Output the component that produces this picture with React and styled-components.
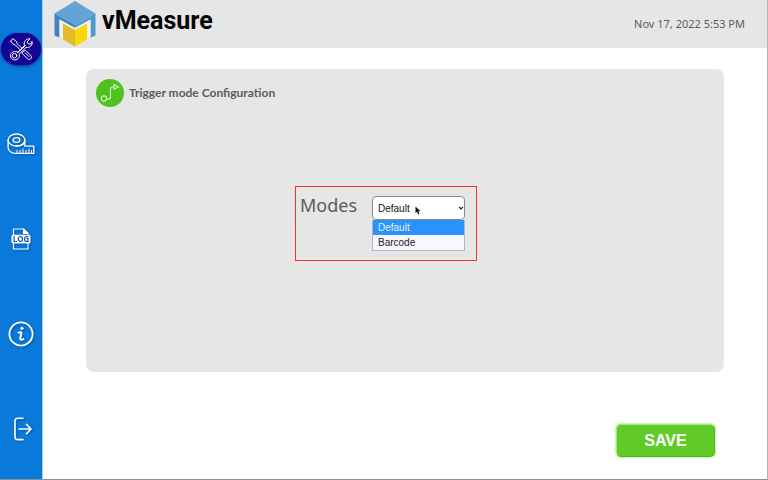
import React, { useState } from "react";
import styled, { createGlobalStyle } from "styled-components";

const MODES = ["Default", "Barcode"];

const ToolsIcon = () => (
  <Glyph width="24" height="24" viewBox="0 0 24 24" strokeWidth="1">
    <path d="M1.6 4 L4 1.6 L7.6 4.6 L7.8 6.2 L12.6 11 M1.6 4 L4.6 7.6 L6.2 7.8 L11 12.6" />
    <path d="M14 14.6 L16.4 13.2 L21.8 18.4 C23.6 21 20.8 23.8 18.4 21.8 L13.2 16.4 Z M16.2 15.8 L19.8 19.4" />
    <path d="M8.8 15.2 L15.4 8.6 C14.4 4.6 17.2 1.2 21 1.8 L18 5 L19.2 7 L21.4 7.2 L23 4.4 C24 8.2 20.8 11.2 17 10.4 L10.2 17.2 C11.2 21 8 23.6 4.6 22.8 C0.4 21.4 0.4 16.2 4.2 14.8 C6 14.2 7.6 14.4 8.8 15.2 Z" />
    <circle cx="5.5" cy="18.7" r="2.3" />
    <path d="M9 15.6 L16.6 8.4" />
  </Glyph>
);

const TapeIcon = () => (
  <Glyph width="28" height="24" viewBox="0 0 28 24" strokeWidth="1.3">
    <ellipse cx="9.5" cy="8" rx="8.4" ry="6" />
    <ellipse cx="9.5" cy="8" rx="3.4" ry="2.3" />
    <path d="M1.1 8 v7.4 c0 3.4 3.6 6 8 6 H26.8 v-7.2 H17.9 V8 M9.5 14 c3.4 0 6.2-1 7.8-2.8" />
    <path d="M10 21 v-2.6 M13 21 v-2.6 M16 21 v-4 M19 21 v-2.6 M22 21 v-4 M24.5 21 v-2.6" strokeWidth="1" />
  </Glyph>
);

const LogIcon = () => (
  <Glyph width="20" height="22" viewBox="0 0 20 22" strokeWidth="1.1">
    <path d="M2.5 7 V1 H12.5 L17 5.5 V7 M2.5 15 V21 H17 V15" />
    <path d="M12.5 1 L17 5.5 H12.5 Z" fill="#fff" />
    <rect x="1" y="7.2" width="18" height="7.8" rx="1" fill="#fff" />
    <text x="10" y="13.8" textAnchor="middle">LOG</text>
  </Glyph>
);

const InfoIcon = () => (
  <Glyph width="26" height="26" viewBox="0 0 26 26" strokeWidth="1.8">
    <circle cx="13" cy="13" r="11.6" />
    <circle cx="14" cy="7.4" r="1.3" fill="#fff" strokeWidth="0.5" />
    <path d="M10.6 11.6 C12 11 13.8 10.8 13.4 12.6 L12.2 17.2 C12 19.2 13.6 19.2 15.4 18" strokeWidth="2" />
  </Glyph>
);

const ExitIcon = () => (
  <Glyph width="22" height="24" viewBox="-4 0 22 24" strokeWidth="1.6">
    <path d="M9 1.2 H3.6 Q1 1.2 1 4 V19.8 Q1 22.6 3.6 22.6 H9 M5 12 H16.6 M12.6 7.4 L17 12 L12.6 16.6" />
  </Glyph>
);

const CubeLogo = () => (
  <svg width="42" height="46" viewBox="0 0 42 46" aria-hidden="true">
    <path d="M21 0 L41.5 12.5 L21 24 L0.5 12.5 Z" fill="#64a4d4" />
    <path d="M0.5 12.5 L21 24 V27 L5.5 18.5 V36.5 L0.5 34.5 Z" fill="#3c85bb" />
    <path d="M41.5 12.5 L21 24 V27 L36.5 18.5 V36.5 L41.5 34.5 Z" fill="#4f98ca" />
    <path d="M5.5 18.5 L21 27 L36.5 18.5 V36 L33 37 V23 L21 29.5 L9 23 V37 L5.5 36 Z" fill="#f0f0ee" />
    <path d="M9 22.5 L21 29 V45.5 L9 38.5 Z" fill="#e2bd28" />
    <path d="M33 22.5 L21 29 V45.5 L33 38.5 Z" fill="#fbd80d" />
  </svg>
);

const NAV = [
  { label: "Settings", Icon: ToolsIcon, active: true },
  { label: "Measure", Icon: TapeIcon },
  { label: "Logs", Icon: LogIcon },
  { label: "About", Icon: InfoIcon },
  { label: "Exit", Icon: ExitIcon },
];

const App = () => {
  const [mode, setMode] = useState("Default");

  return (
    <>
      <GlobalStyle />
      <Page>
        <Sidebar>
          {NAV.map(({ label, Icon, active }) => (
            <NavButton key={label} type="button" aria-label={label} $active={active}>
              <Icon />
            </NavButton>
          ))}
        </Sidebar>
        <Content>
          <Header>
            <Brand>
              <CubeLogo />
              <BrandName>vMeasure</BrandName>
            </Brand>
            <Clock>Nov 17, 2022 5:53 PM</Clock>
          </Header>
          <Main>
            <Panel>
              <PanelHeader>
                <PanelBadge>
                  <svg width="20" height="20" viewBox="0 0 20 20" fill="none" stroke="#d9f5c4" strokeWidth="1.1">
                    <circle cx="4" cy="15.5" r="2.6" />
                    <path d="M6.6 16 H8.5 Q10.5 16 10.5 14 V6 Q10.5 4 12.5 4 H14 M14 1.6 L18.4 4 L14 6.4 Z" />
                  </svg>
                </PanelBadge>
                <PanelTitle>Trigger mode Configuration</PanelTitle>
              </PanelHeader>
              <PanelBody>
                <ModeField>
                  <ModeLabel htmlFor="mode">Modes</ModeLabel>
                  <SelectWrap>
                    <ModeSelect id="mode" value={mode} onChange={(e) => setMode(e.target.value)}>
                      {MODES.map((name) => (
                        <option key={name}>{name}</option>
                      ))}
                    </ModeSelect>
                    <Chevron width="6" height="4" viewBox="0 0 6 4" fill="none" stroke="#222" strokeWidth="1.2">
                      <path d="M1 0.8 L3 2.8 L5 0.8" />
                    </Chevron>
                    <Pointer width="6" height="9" viewBox="0 0 6 9">
                      <path d="M0.5 0.5 V7 L2 5.8 L3.2 8.5 L4.4 8 L3.3 5.3 H5.5 Z" fill="#111" />
                    </Pointer>
                    <OptionList role="listbox" aria-label="Modes">
                      {MODES.map((name) => (
                        <OptionRow
                          key={name}
                          role="option"
                          aria-selected={name === mode}
                          $selected={name === mode}
                          onClick={() => setMode(name)}
                        >
                          {name}
                        </OptionRow>
                      ))}
                    </OptionList>
                  </SelectWrap>
                </ModeField>
              </PanelBody>
            </Panel>
            <Actions>
              <SaveButton type="button">SAVE</SaveButton>
            </Actions>
          </Main>
        </Content>
      </Page>
    </>
  );
};

const GlobalStyle = createGlobalStyle`
  * {
    box-sizing: border-box;
  }

  body {
    margin: 0;
    background: #fff;
    font-family: "Noto Sans", sans-serif;
    color: #5c5c5c;
  }
`;

const Page = styled.div`
  display: flex;
  min-height: 100vh;
  border-right: 1px solid #b4b4b4;
  border-bottom: 1px solid #8f8f8f;
`;

const Sidebar = styled.nav`
  display: flex;
  flex-direction: column;
  gap: 63px;
  flex-shrink: 0;
  width: 43px;
  padding: 33px 1px 0;
  background: #0a7ada;
  border-right: 1px solid #a9d0f2;
`;

const NavButton = styled.button`
  display: flex;
  align-items: center;
  justify-content: center;
  height: 32px;
  padding: 0;
  border: 0;
  border-radius: 16px;
  cursor: pointer;
  background: ${(props) => (props.$active ? "#150297" : "transparent")};
  box-shadow: ${(props) => (props.$active ? "0 1px 3px rgba(0, 0, 40, 0.6)" : "none")};
`;

const Glyph = styled.svg.attrs({
  fill: "none",
  stroke: "#fff",
  strokeLinecap: "round",
  strokeLinejoin: "round",
  "aria-hidden": true,
})`
  filter: drop-shadow(1px 1px 1px rgba(0, 30, 80, 0.4));

  text {
    font: 700 8px "Open Sans", sans-serif;
    fill: #17579a;
    stroke: none;
  }
`;

const Content = styled.div`
  display: flex;
  flex-direction: column;
  flex: 1;
  min-width: 0;
`;

const Header = styled.header`
  display: flex;
  align-items: center;
  justify-content: space-between;
  height: 48px;
  padding: 0 22px 0 11px;
  background: #e6e6e6;
`;

const Brand = styled.div`
  display: flex;
  gap: 6px;
  height: 46px;
`;

const BrandName = styled.span`
  font-family: Roboto, sans-serif;
  font-weight: 700;
  font-size: 25px;
  line-height: 40px;
  color: #050505;
`;

const Clock = styled.time`
  font-size: 11px;
  line-height: 16px;
  white-space: nowrap;
`;

const Main = styled.main`
  display: flex;
  flex-direction: column;
  flex: 1;
  padding: 21px 43px 22px;
`;

const Panel = styled.section`
  display: flex;
  flex-direction: column;
  flex: 1;
  padding: 10px;
  border-radius: 8px;
  background: #e6e6e6;
`;

const PanelHeader = styled.div`
  display: flex;
  align-items: center;
  gap: 5px;
`;

const PanelBadge = styled.span`
  display: flex;
  align-items: center;
  justify-content: center;
  width: 28px;
  height: 28px;
  border-radius: 50%;
  background: #4fc220;
`;

const PanelTitle = styled.h1`
  margin: 0;
  font-family: Lato, "Noto Sans", sans-serif;
  font-size: 12px;
  font-weight: 700;
  line-height: 16px;
`;

const PanelBody = styled.div`
  display: flex;
  align-items: center;
  justify-content: center;
  flex: 1;
  padding: 0 38px 22px 0;
`;

const ModeField = styled.div`
  display: flex;
  align-items: flex-start;
  justify-content: space-between;
  width: 182px;
  height: 75px;
  padding: 9px 11px 0 4px;
  border: 1px solid #ef3338;
`;

const ModeLabel = styled.label`
  font-size: 18px;
  line-height: 18px;
`;

const SelectWrap = styled.div`
  position: relative;
  width: 93px;
  font-family: "Liberation Sans", Arial, sans-serif;
  font-size: 10px;
`;

const ModeSelect = styled.select`
  display: block;
  width: 100%;
  height: 24px;
  padding: 0 5px;
  border: 1px solid #8b8b8b;
  border-radius: 4px;
  background: #fff;
  color: #111;
  font: inherit;
  appearance: none;
`;

const Chevron = styled.svg`
  position: absolute;
  top: 10px;
  right: 1px;
  pointer-events: none;
`;

const Pointer = styled.svg`
  position: absolute;
  top: 10px;
  left: 43px;
  pointer-events: none;
`;

const OptionList = styled.ul`
  position: absolute;
  top: 100%;
  left: 0;
  width: 100%;
  margin: 0;
  padding: 0;
  border: 1px solid #b5b5bd;
  border-top: 0;
  list-style: none;
`;

const OptionRow = styled.li`
  padding: 0 5px;
  line-height: 15px;
  color: ${(props) => (props.$selected ? "#e4f3ff" : "#222")};
  background: ${(props) => (props.$selected ? "#2a92fa" : "#f8f7ff")};
`;

const Actions = styled.div`
  display: flex;
  justify-content: flex-end;
  padding: 52px 9px 0 0;
`;

const SaveButton = styled.button`
  width: 99px;
  height: 33px;
  padding: 0;
  border: 1px solid;
  border-color: #a5ec80 #4bb918 #4bb918 #a5ec80;
  border-radius: 5px;
  background: #60cb27;
  box-shadow: 0 0 1px 1px #c9f3b4;
  color: #fff;
  font-family: "Liberation Sans", Arial, sans-serif;
  font-size: 16px;
  font-weight: 700;
  cursor: pointer;
`;

export default App;
